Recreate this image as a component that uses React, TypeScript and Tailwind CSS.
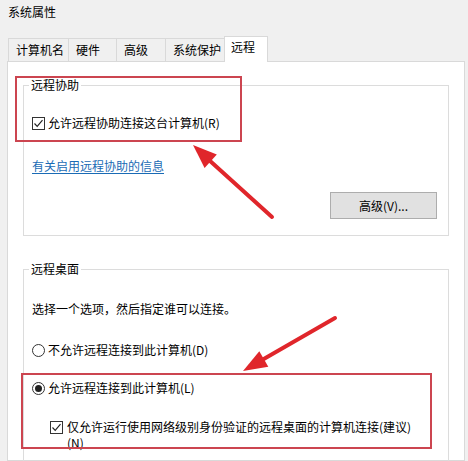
import React from "react";

const font = { fontFamily: '"Noto Sans CJK SC", "Microsoft YaHei", sans-serif' };

const tabs = [
  { label: "计算机名", w: "w-[60px]" },
  { label: "硬件", w: "w-[48px]" },
  { label: "高级", w: "w-[49px]" },
  { label: "系统保护", w: "w-[59px]" },
];

const CheckBox = () => (
  <span className="flex h-[13px] w-[13px] shrink-0 items-center justify-center border border-[#333] bg-white">
    <svg width="11" height="11" viewBox="0 0 11 11">
      <path d="M1.5 5.5 L4.2 8.3 L9.5 2.2" fill="none" stroke="#222" strokeWidth="1.2" />
    </svg>
  </span>
);

const Radio = ({ checked }: { checked?: boolean }) => (
  <span className="flex h-[13px] w-[13px] shrink-0 items-center justify-center rounded-full border border-[#333] bg-white">
    {checked && <span className="h-[7px] w-[7px] rounded-full bg-[#222]" />}
  </span>
);

export default function App() {
  return (
    <div
      className="relative h-[461px] w-[468px] overflow-hidden bg-[#f0f0f0] text-[12px] text-black"
      style={font}
    >
      {/* title */}
      <div className="h-[36px] pl-[8px] pt-[4px] leading-[16px]">系统属性</div>

      {/* tabs */}
      <div className="relative z-10 flex h-[26px] items-end pl-[8px]">
        {tabs.map((t) => (
          <div
            key={t.label}
            className={`${t.w} mb-[1px] h-[23px] border border-b-0 border-r-0 border-[#d9d9d9] bg-[#f0f0f0] pl-[7px] pt-[3px] leading-[16px]`}
          >
            {t.label}
          </div>
        ))}
        <div className="h-[26px] w-[44px] border border-b-0 border-[#d9d9d9] bg-white pl-[6px] pt-[2px] leading-[16px]">
          远程
        </div>
      </div>

      {/* panel */}
      <div className="-mt-[1px] ml-[7px] mr-[3px] h-[400px] border border-[#d9d9d9] bg-white px-[15px]">
        <fieldset className="mt-[15px] border border-[#dcdcdc] px-[8px] pb-[16px]">
          <legend className="ml-[-3px] px-[2px] leading-[16px]">远程协助</legend>
          <div className="mt-[22px] flex h-[16px] items-center gap-[3px]">
            <CheckBox />
            <span className="leading-[16px]">允许远程协助连接这台计算机(R)</span>
          </div>
          <div className="mt-[27px] leading-[16px]">
            <span className="text-[#1a6bb5] underline underline-offset-2">有关启用远程协助的信息</span>
          </div>
          <div className="mt-[18px] flex justify-end pr-[3px]">
            <div className="flex h-[27px] w-[107px] items-center justify-center border border-[#adadad] bg-[#e1e1e1]">
              高级(V)...
            </div>
          </div>
        </fieldset>

        <fieldset className="mt-[25px] border border-[#dcdcdc] px-[8px] pb-[20px]">
          <legend className="ml-[-3px] px-[2px] leading-[16px]">远程桌面</legend>
          <div className="mt-[24px] leading-[16px]">选择一个选项，然后指定谁可以连接。</div>
          <div className="mt-[25px] flex h-[16px] items-center gap-[3px]">
            <Radio />
            <span className="leading-[16px]">不允许远程连接到此计算机(D)</span>
          </div>
          <div className="mt-[22px] flex h-[16px] items-center gap-[3px]">
            <Radio checked />
            <span className="leading-[16px]">允许远程连接到此计算机(L)</span>
          </div>
          <div className="ml-[18px] mt-[23px] flex items-start gap-[4px]">
            <div className="mt-[2px]">
              <CheckBox />
            </div>
            <span className="leading-[16px]">
              仅允许运行使用网络级别身份验证的远程桌面的计算机连接(建议)
              <br />
              (N)
            </span>
          </div>
        </fieldset>
      </div>

      {/* annotations */}
      <div className="pointer-events-none absolute left-[15px] top-[76px] h-[66px] w-[227px] border-2 border-[#cc4550]" />
      <div className="pointer-events-none absolute left-[21px] top-[373px] h-[76px] w-[411px] border-2 border-[#cc4550]" />
      <svg className="pointer-events-none absolute left-0 top-0" width="468" height="461">
        <line x1="272" y1="217" x2="209" y2="160" stroke="#e0262b" strokeWidth="4" strokeLinecap="round" />
        <polygon points="193,145 216.8,154.5 204.6,167.9" fill="#e0262b" />
        <line x1="335" y1="318" x2="262" y2="360" stroke="#e0262b" strokeWidth="4" strokeLinecap="round" />
        <polygon points="243,371 268.3,366.8 259.3,351.2" fill="#e0262b" />
      </svg>
    </div>
  );
}
